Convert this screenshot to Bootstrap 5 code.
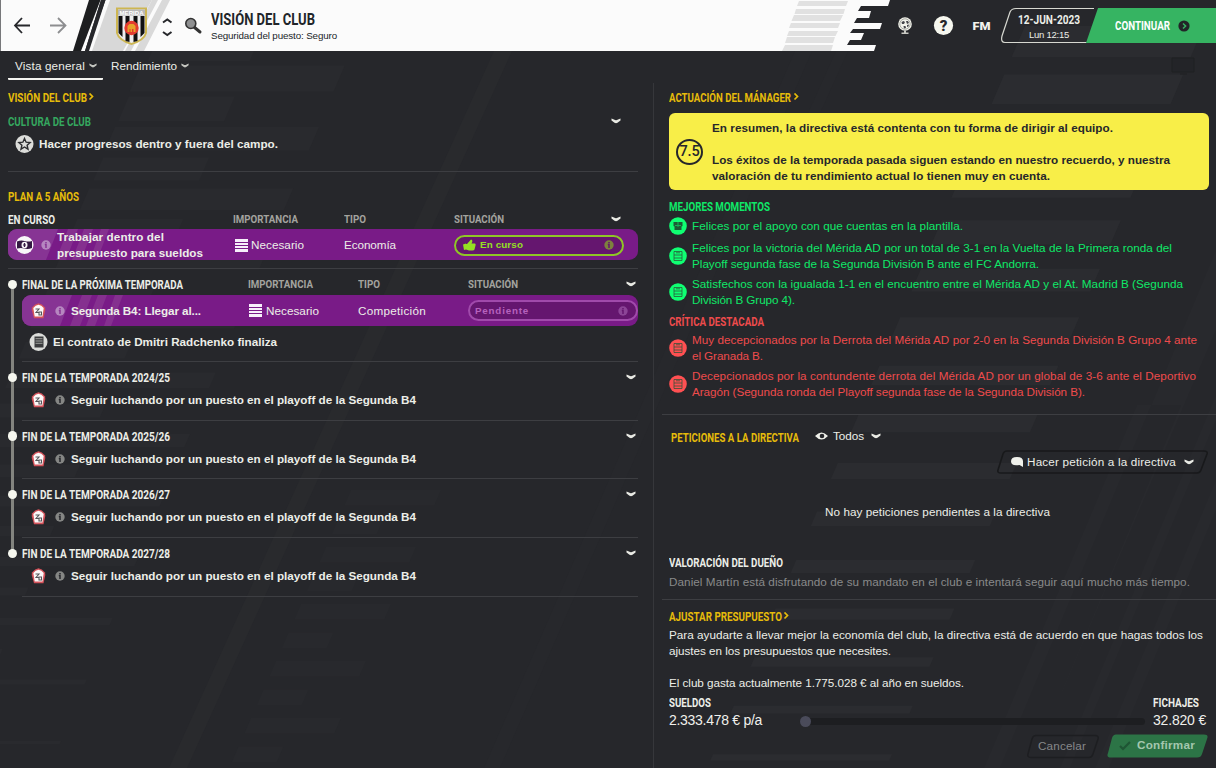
<!DOCTYPE html>
<html lang="es">
<head>
<meta charset="utf-8">
<meta name="viewport" content="width=device-width, initial-scale=1">
<title>Visión del club</title>
<link href="https://cdn.jsdelivr.net/npm/bootstrap@5.3.0/dist/css/bootstrap.min.css" rel="stylesheet">
<style>
body{width:1216px;height:768px;overflow:hidden;background:#26272b;color:#eceee8;font:11.7px/16px "Liberation Sans",Arial,sans-serif}
svg{display:block;flex:none}
.backdrop{position:absolute;left:0;top:0;z-index:0}
.topbar,.page{position:relative;z-index:1}
.topbar{height:51px}
.sp{display:inline-block;white-space:nowrap;font-weight:400}
.b{font-weight:700}
.hd{display:inline-block;white-space:nowrap;font:700 13px/16px Roboto,sans-serif;transform-origin:0 50%}
.page .hd{padding-top:1px;line-height:15px}
.gold{color:#e6bc0a}.green{color:#35a75f}.bright{color:#0fe868}.red{color:#ee4b4c}
.page .col-lab{font-size:10.5px;font-weight:700;color:#a3a39f}
.left{width:654px;height:717px}
.right{width:562px;height:717px}
.tabs{height:32px}
.tab{height:29px;padding:1px 7px 0}
.tab.on{border-bottom:2px solid #f4f4f0;border-radius:0 0 1px 1px;padding-top:3px}
.rule{height:1px;background:#3d3e42}
.goal{height:31px;background:#791b87;border-radius:9px;position:relative;overflow:hidden}
.goal>.stripes{position:absolute;left:0;top:0}
.goal>*{position:relative}
.grid{display:grid;align-items:center}
.g1{grid-template-columns:225px 111px 110px 1fr}
.g2{grid-template-columns:226px 110px 110px 1fr}
.pill{height:21px;width:170px;border:2px solid #8fc626;border-radius:11px;background:#65166f;color:#95e022;font-size:9.8px}
.pill.wait{border-color:#a04aab;color:#b562bd}
.timeline{position:relative;padding-left:22px}
.timeline::before{content:"";position:absolute;left:11px;top:16px;width:3px;height:268px;background:#83847f}
.season{position:relative;border-bottom:1px solid #3d3e42}
.season::before{content:"";position:absolute;left:-14.5px;top:10.5px;width:9.5px;height:9.5px;border-radius:50%;background:#f6f7ef}
.season.yr{height:58.7px}
.verdict{height:77px;background:#f8ee48;color:#26272b;border-radius:6px}
.score{width:27px;height:26px;border:2.5px solid #26272b;border-radius:50%;font:700 14.5px/21px Roboto,sans-serif}
.score .sp{font-weight:500}
.divide{border-left:1px solid #36373b;height:685px;margin-top:32px}
.dim{color:#898a8a}
.money{font-size:14px;line-height:18px;color:#f0f0ec}
.track{height:7px;background:#1d1e21;border-radius:4px}
.knob{width:11px;height:11px;border-radius:50%;background:#4a4b5a}
</style>
</head>
<body>
<svg class="backdrop" id="backdrop" width="1216" height="768"></svg>

<header class="topbar d-flex align-items-start">
  <svg width="211" height="51" viewBox="0 0 211 51">
    <path d="M0 0h1v51H0z" fill="#77787a"/>
    <path d="M107 0H152L123 51H90z" fill="#d8d8d8"/>
    <path d="M101 0H107L91 51H85z" fill="#26272b"/><path d="M89 0H100.500L81 51H73z" fill="#1d1e20"/>
    <path d="M105.500 0H110L92 51H87z" fill="#fafafa"/><path d="M101 0H105.500L89 51H85z" fill="#26272b"/>
    <path d="M152 0H158L131 51H125zM162 0H170L144 51H135z" fill="#d9d9d9"/>
    <path d="M116 7.500H147V33Q145 41 131.500 45Q118 41 116 33z" fill="#cdb652"/>
    <path d="M118 9.500H145V33Q143 39.500 131.500 43Q120 39.500 118 33z" fill="#eee"/>
    <path d="M118.500 16h4v21l-4-4zM125.500 16h4v26l-4-1zM133.500 16h4v25l-4 1zM140.500 16h4v17l-4 4z" fill="#111"/>
    <path d="M118 9.500h27v6h-27z" fill="#b9b9b9"/>
    <text x="119.500" y="15" font-family="Liberation Sans" font-size="6" font-weight="700" fill="#fff" textLength="24">MERIDA</text>
    <circle cx="131.500" cy="28" r="7.200" fill="#e23b2f"/><path d="M127.500 32v-6l2-2h4l2 2v6h-2v-3h-1.500v3h-1.500v-3h-1v3z" fill="#e8a22b"/>
    <g fill="none" stroke="#26272b" stroke-width="1.800"><path d="M30 25.500H15M22 18L15 25.500L22 33"/><path d="M50 25.500H65M58 18L65.500 25.500L58 33" stroke="#8d8e90"/>
    <path d="M163 22.500L167.300 19.500L171.500 22.500M163 32L167.300 35L171.500 32" stroke-width="2"/></g>
    <path d="M194 27L200 32" stroke="#333" stroke-width="3" stroke-linecap="round"/><circle cx="190.800" cy="23.500" r="5" fill="#8f9091" stroke="#333" stroke-width="1.600"/>
  </svg>
  <div class="text-dark d-flex flex-column" style="width:566px;padding-top:9px">
    <h1 class="hd m-0" data-w="104" style="font-size:17px;line-height:20px">VISIÓN DEL CLUB</h1>
    <span style="line-height:12px"><span class="sp" data-w="126" style="font-size:9.8px;line-height:12px">Seguridad del puesto: Seguro</span></span>
  </div>
  <svg width="223" height="51" viewBox="777 0 223 51">
    <path fill="#e1e1e1" d="M799 1H848L846 6H797zM796 9H845L843.500 14H794.500zM794 15H843L840 21H791.500zM791 23H840L838 28H789zM789 31H838L835.500 36H787zM787 37H835L833 43H785zM785 45H833L831 51H782z"/>
    <g transform="translate(905 25)"><circle cy="-1" r="6.800" fill="#f1f2ea"/><circle cy="-1" r="5.200" fill="none" stroke="#8b8c86" stroke-width=".7"/><path d="M-3.500-3l2-1 1.500 1-1 2h-2zM1-4h2l1 2-2 1zM-1.500 1h2l.5 2-2 .5zM2 0l2-.5-.5 2-1.500.5z" fill="#44454a"/><path d="M-1 5.500h2v2h2.500V9h-7V7.500H-1z" fill="#c9cac4"/></g>
    <circle cx="943.500" cy="25.500" r="9.600" fill="#f6f7ef"/><text x="943.500" y="31" text-anchor="middle" font-family="Roboto" font-size="15" font-weight="900" fill="#26272b">?</text>
    <text x="972.500" y="30" font-family="Roboto" font-weight="900" font-size="11.500" fill="#f2f3eb" textLength="18" lengthAdjust="spacingAndGlyphs">FM</text>
  </svg>
  <div class="position-relative" style="width:216px;height:51px">
    <svg class="position-absolute" width="216" height="51" viewBox="1000 0 216 51"><path d="M1094 8.500H1016Q1011.500 8.500 1010 12L1002 36Q1000.500 42.500 1005 42.500H1088" fill="none" stroke="#d7d8d1" stroke-width="1.200"/><path d="M1098 8H1216V43H1086z" fill="#36b462"/><circle cx="1184" cy="26" r="5.600" fill="#222528"/><path d="M1183 23.500l2.600 2.500-2.600 2.500" fill="none" stroke="#36b462" stroke-width="1.500"/></svg>
    <div class="d-flex position-relative" style="padding:11px 0 0 18px">
      <div style="width:97px"><span class="hd" data-w="62" style="line-height:17px">12-JUN-2023</span><div style="padding-left:11px;line-height:11px"><span class="sp" data-w="40" style="font-size:9.500px;line-height:11px">Lun 12:15</span></div></div>
      <span class="hd text-white" data-w="55" style="margin-top:7px">CONTINUAR</span>
    </div>
  </div>
</header>

<main class="page d-flex">
  <section class="left">
    <nav class="tabs d-flex" style="padding-left:8px">
      <div class="tab on d-flex align-items-center gap-1" style="width:95px"><span class="sp" data-w="70">Vista general</span><svg class="chev s" width="8" height="6" viewBox="0 0 10 7"></svg></div>
      <div class="tab d-flex align-items-center gap-1" style="padding-left:8px"><span class="sp" data-w="66">Rendimiento</span><svg class="chev s" width="8" height="6" viewBox="0 0 10 7"></svg></div>
    </nav>
    <div style="padding:6px 16px 0 8px">
      <div class="d-flex align-items-center gold" style="height:16px"><span class="hd" data-w="79">VISIÓN DEL CLUB</span><svg width="8" height="8"><path d="M2.500 .500l3 3-3 3" fill="none" stroke="#e6bc0a" stroke-width="1.700"/></svg></div>
      <div class="d-flex align-items-center justify-content-between green" style="height:16px;margin-top:8px;padding-right:17px"><span class="hd" data-w="83">CULTURA DE CLUB</span><svg class="chev" width="10" height="6"></svg></div>
      <div class="d-flex align-items-center" style="height:18px;margin-top:6px;padding-left:7px;gap:5px"><svg width="19" height="18"><circle cx="9.500" cy="9" r="9" fill="#dcddda"/><path d="M9.500 3.500l1.600 3.700 4 .3-3 2.700.9 4-3.500-2.200L6 14.200l.9-4-3-2.700 4-.3z" fill="#dcddda" stroke="#2c2d30" stroke-width="1.400"/></svg><span class="sp b" data-w="239">Hacer progresos dentro y fuera del campo.</span></div>
      <div class="rule" style="margin-top:18px"></div>
      <div style="height:16px;margin-top:16px"><span class="hd gold" data-w="71">PLAN A 5 AÑOS</span></div>
      <div class="grid g1 position-relative" style="height:16px;margin-top:7px"><span class="hd" data-w="47">EN CURSO</span><span class="hd col-lab" data-w="65">IMPORTANCIA</span><span class="hd col-lab" data-w="22">TIPO</span><span class="d-flex align-items-center justify-content-between" style="padding-right:17px"><span class="hd col-lab" data-w="50">SITUACIÓN</span><svg class="chev" width="10" height="6"></svg></span></div>
      <div class="goal grid g1" style="margin-top:2px">
        <svg class="stripes position-absolute" width="130" height="31"><path d="M0 0H50L38 31H0z" fill="#873494"/><path d="M60 0h10L58 31H48zM76 0h9L73 31H64zM93 0h8L89 31h-7z" fill="#85308f"/></svg>
        <div class="d-flex align-items-center" style="padding-left:7px;gap:7px"><svg width="19" height="18"><circle cx="9.500" cy="9" r="9" fill="#f8f5f9"/><path d="M2 5.500q4-1.500 7.500-.5T17 5v7q-4 1.500-7.500 .5T2 12.500z" fill="#341943"/><ellipse cx="9.500" cy="9" rx="3" ry="3.300" fill="#f8f5f9"/><path d="M9.500 7v4M8.300 9h2.400" stroke="#341943" stroke-width="1.300"/></svg><svg class="info" data-c="#b687c0" data-d="#873494" width="10" height="10"></svg><div style="margin-left:-1px"><div><span class="sp b" data-w="107">Trabajar dentro del</span></div><div><span class="sp b" data-w="146">presupuesto para sueldos</span></div></div></div>
        <div class="d-flex align-items-center" style="gap:3px;padding-left:2px"><svg class="bars" width="13" height="13"></svg><span class="sp" data-w="53">Necesario</span></div>
        <span><span class="sp" data-w="52">Economía</span></span>
        <div class="pill d-flex align-items-center" style="padding:0 8px 0 7px"><svg width="13" height="12" viewBox="0 0 13 12"><path d="M0 5.500L3 4.500V10.500L1 11zM4 5L8 0.500Q10 1 9 3.500L8.500 4.500H12Q13 5 12.500 6.500L11.500 10.500Q11 11.500 9.500 11.500H6L3 10.500V5z" fill="#95e022"/></svg><span class="sp b ms-1 me-auto" data-w="43">En curso</span><svg class="info" data-c="#7d813d" data-d="#65166f" width="10" height="10"></svg></div>
      </div>
      <div class="rule" style="margin-top:8px"></div>
    </div>
    <div class="timeline" style="margin-right:16px">
      <div class="season" style="height:93px;padding-top:7px">
        <div class="grid g2" style="height:16px"><span class="hd" data-w="161">FINAL DE LA PRÓXIMA TEMPORADA</span><span class="hd col-lab" data-w="65">IMPORTANCIA</span><span class="hd col-lab" data-w="22">TIPO</span><span class="d-flex align-items-center justify-content-between" style="padding-right:2px"><span class="hd col-lab" data-w="50">SITUACIÓN</span><svg class="chev" width="10" height="6"></svg></span></div>
        <div class="goal grid g2" style="margin-top:3px">
          <svg class="stripes position-absolute" width="130" height="31"><path d="M0 0H50L38 31H0z" fill="#873494"/><path d="M60 0h10L58 31H48zM76 0h9L73 31H64zM93 0h8L89 31h-7z" fill="#85308f"/></svg>
          <div class="d-flex align-items-center" style="padding-left:9px"><svg class="crest" width="15" height="16"></svg><svg class="info" data-c="#b687c0" data-d="#873494" width="10" height="10" style="margin:0 6px 0 9px"></svg><span class="sp b" data-w="130">Segunda B4: Llegar al...</span></div>
          <div class="d-flex align-items-center" style="gap:4px;padding-left:1px"><svg class="bars" width="13" height="13"></svg><span class="sp" data-w="53">Necesario</span></div>
          <span><span class="sp" data-w="68">Competición</span></span>
          <div class="pill wait d-flex align-items-center" style="padding:0 8px 0 5px"><span class="sp b me-auto" data-w="54">Pendiente</span><svg class="info" data-c="#8c4497" data-d="#65166f" width="10" height="10"></svg></div>
        </div>
        <div class="d-flex align-items-center" style="height:18px;margin-top:7px;padding-left:7px;gap:5px"><svg width="19" height="18"><circle cx="9.500" cy="9" r="9" fill="#dcddda"/><path d="M5.500 3.500h9v11h-9z" fill="#3b3c3e"/><path d="M6.500 5.700h7M6.500 8h7M6.500 10.300h7" stroke="#a9aaa8" stroke-width=".9"/></svg><span class="sp b" data-w="224">El contrato de Dmitri Radchenko finaliza</span></div>
      </div>
      <div id="years"></div>
    </div>
  </section>

  <section class="right d-flex">
    <div class="divide" style="width:9px;margin-left:-1px"></div>
    <div style="width:554px;padding-top:38px">
      <div style="padding:0 7px 0 7px">
        <div class="d-flex align-items-center" style="height:16px"><span class="hd gold" data-w="122">ACTUACIÓN DEL MÁNAGER</span><svg width="8" height="8" style="margin-left:1px"><path d="M2.500 .500l3 3-3 3" fill="none" stroke="#e6bc0a" stroke-width="1.700"/></svg></div>
        <div class="verdict d-flex align-items-center" style="margin-top:8px;padding-left:7px;gap:9px"><div class="score text-center"><span class="sp" data-w="20">7.5</span></div><div><div><span class="sp b" data-w="401">En resumen, la directiva está contenta con tu forma de dirigir al equipo.</span></div><div style="height:16px"></div><div><span class="sp b" data-w="458">Los éxitos de la temporada pasada siguen estando en nuestro recuerdo, y nuestra</span></div><div><span class="sp b" data-w="338">valoración de tu rendimiento actual lo tienen muy en cuenta.</span></div></div></div>
        <div style="height:16px;margin-top:8px"><span class="hd bright" data-w="101">MEJORES MOMENTOS</span></div>
        <div id="good" class="bright"></div>
        <div style="height:16px;margin-top:5px"><span class="hd red" data-w="95">CRÍTICA DESTACADA</span></div>
        <div id="bad" class="red" style="padding-top:3px"></div>
      </div>
      <div class="rule" style="margin-top:14px"></div>
      <div style="padding:0 7px">
        <div class="d-flex align-items-center" style="height:16px;margin-top:14px;padding-left:2px"><span class="hd gold" data-w="128">PETICIONES A LA DIRECTIVA</span><svg width="13" height="10" style="margin:-3px 5px 0 16px"><path d="M0 5Q6.500-2 13 5Q6.500 12 0 5z" fill="#f0f1eb"/><circle cx="7" cy="5" r="2.300" fill="#26272b"/></svg><span class="sp" data-w="31" style="margin-top:-3px">Todos</span><svg class="chev" width="10" height="6" style="margin:-2px 0 0 7px"></svg></div>
        <div class="d-flex justify-content-end" style="height:24px;margin:5px 1px 0 0">
          <div class="position-relative d-flex align-items-center" style="width:211px;padding-left:14px"><svg class="position-absolute start-0 top-0" width="211" height="24"><path d="M10 1H207Q211 1 210 4L204 20Q203 23 200 23H4Q0 23 1 20L6 4Q7 1 10 1z" fill="none" stroke="#18191b" stroke-width="1.600"/></svg><svg width="12" height="10" class="position-relative"><path d="M6 0Q12 0 12 4.300V10L8.500 8Q0 9.500 0 4.300Q0 0 6 0z" fill="#f0f1eb"/></svg><span class="sp position-relative" data-w="149" style="margin-left:4px">Hacer petición a la directiva</span><svg class="chev position-relative" width="10" height="6" style="margin-left:8px"></svg></div>
        </div>
        <div style="margin-top:30px;padding-left:156px"><span class="sp" data-w="225">No hay peticiones pendientes a la directiva</span></div>
        <div style="height:16px;margin-top:34px"><span class="hd" data-w="114">VALORACIÓN DEL DUEÑO</span></div>
        <div class="dim" style="margin-top:4px"><span class="sp" data-w="521">Daniel Martín está disfrutando de su mandato en el club e intentará seguir aquí mucho más tiempo.</span></div>
      </div>
      <div class="rule" style="margin-top:9px"></div>
      <div style="padding:8px 7px 0">
        <div class="d-flex align-items-center" style="height:16px"><span class="hd gold" data-w="113">AJUSTAR PRESUPUESTO</span><svg width="8" height="8"><path d="M2.500 .500l3 3-3 3" fill="none" stroke="#e6bc0a" stroke-width="1.700"/></svg></div>
        <div style="margin-top:3px"><span class="sp" data-w="534">Para ayudarte a llevar mejor la economía del club, la directiva está de acuerdo en que hagas todos los</span></div>
        <div><span class="sp" data-w="222">ajustes en los presupuestos que necesites.</span></div>
        <div style="margin-top:16px"><span class="sp" data-w="295">El club gasta actualmente 1.775.028 € al año en sueldos.</span></div>
        <div class="d-flex" style="margin-top:3px">
          <div style="width:131px"><div style="height:16px"><span class="hd" data-w="42">SUELDOS</span></div><div class="money"><span class="sp" data-w="93" style="margin-top:1px">2.333.478 € p/a</span></div></div>
          <div style="width:345px;padding-top:24px"><div class="track"><div class="knob" style="transform:translateY(-2px)"></div></div></div>
          <div style="padding-left:8px"><div style="height:16px"><span class="hd" data-w="46">FICHAJES</span></div><div class="money"><span class="sp" data-w="53" style="margin-top:1px">32.820 €</span></div></div>
        </div>
        <div class="d-flex justify-content-end gap-2" style="margin:5px 1px 0 0">
          <div class="position-relative" style="width:72px;height:25px;padding:4px 0 0 11px;color:#86878a"><svg class="position-absolute start-0 top-0" width="72" height="25"><path d="M9 1.500H68Q72 1.500 71 5L66 20Q65 23.500 62 23.500H4Q0 23.500 1 20L5 5Q6 1.500 9 1.500z" fill="none" stroke="#1d1e21" stroke-width="1.500"/></svg><span class="sp position-relative" data-w="48">Cancelar</span></div>
          <div class="position-relative d-flex" style="width:101px;height:25px;padding:3px 0 0 13px;color:#a3c7ae"><svg class="position-absolute start-0 top-0" width="101" height="25"><path d="M9 .5H97Q102 .5 100 5L95 20Q94 23.500 90 23.500H4Q-1 23.500 1 19L5 4Q6 .5 9 .5z" fill="#2c7446"/><path d="M13 12l3 3L23 8" fill="none" stroke="#1f5534" stroke-width="2.200"/></svg><span class="sp b position-relative" data-w="58" style="margin-left:17px">Confirmar</span></div>
        </div>
      </div>
    </div>
  </section>
</main>

<script src="https://cdn.jsdelivr.net/npm/bootstrap@5.3.0/dist/js/bootstrap.bundle.min.js"></script>
<script>
const all = (s) => document.querySelectorAll(s);

// Season rows of the five-year plan
document.getElementById('years').innerHTML = ['2024/25', '2025/26', '2026/27', '2027/28'].map(y => `
  <div class="season yr"><div class="d-flex align-items-center justify-content-between" style="height:23px;padding:7px 2px 0 0"><span class="hd" data-w="148">FIN DE LA TEMPORADA ${y}</span><svg class="chev" width="10" height="6"></svg></div>
  <div class="d-flex align-items-center" style="height:16px;margin-top:7px;padding-left:9px"><svg class="crest" width="15" height="16"></svg><svg class="info" data-c="#858684" data-d="#26272b" width="10" height="10" style="margin:0 6px 0 9px"></svg><span class="sp b" data-w="345">Seguir luchando por un puesto en el playoff de la Segunda B4</span></div></div>`).join('');

// Board feedback lists
const feed = (id, color, items) => document.getElementById(id).innerHTML = items.map((lines, i) => `
  <div class="d-flex align-items-center" style="gap:5px;margin-bottom:${lines.length > 1 ? 4 : 5}px;padding-top:${lines.length > 1 ? 0 : 3}px"><svg width="18" height="18"><circle cx="9" cy="9" r="8.800" fill="${color}"/>${lines.length > 1
    ? '<path d="M5 4.500h8v9H5zM5 8h8M5 11h8M7 5.800h4" fill="none" stroke="#2b5138" stroke-opacity=".75" stroke-width="1"/>'
    : '<path d="M4.500 5h9v4l-1 .5V13H5.500V9.500l-1-.5z" fill="#1d5a35"/><path d="M9 5v5M6 8.500h6" stroke="#13b255"/>'}</svg><div>${lines.map(l => `<div><span class="sp" data-w="${l[1]}">${l[0]}</span></div>`).join('')}</div></div>`).join('');
feed('good', '#0fff72', [
  [['Felices por el apoyo con que cuentas en la plantilla.', 271]],
  [['Felices por la victoria del Mérida AD por un total de 3-1 en la Vuelta de la Primera ronda del', 480], ['Playoff segunda fase de la Segunda División B ante el FC Andorra.', 347]],
  [['Satisfechos con la igualada 1-1 en el encuentro entre el Mérida AD y el At. Madrid B (Segunda', 491], ['División B Grupo 4).', 103]]]);
feed('bad', '#ff5052', [
  [['Muy decepcionados por la Derrota del Mérida AD por 2-0 en la Segunda División B Grupo 4 ante', 505], ['el Granada B.', 71]],
  [['Decepcionados por la contundente derrota del Mérida AD por un global de 3-6 ante el Deportivo', 504], ['Aragón (Segunda ronda del Playoff segunda fase de la Segunda División B).', 393]]]);

// Repeated icons
all('.chev').forEach(e => e.innerHTML = `<path d="M.5 .5L3 1.600Q5 3 7 1.600L9.500 .5V2.600L6.500 4.800Q5 5.700 3.500 4.800L.5 2.600z" fill="${e.classList.contains('s') ? '#c4c5c0' : '#e9eae4'}"/>`);
all('.info').forEach(e => e.innerHTML = `<circle cx="5" cy="5" r="4.700" fill="${e.dataset.c}"/><path d="M5 2v1.300M3.800 4.600H5V8" stroke="${e.dataset.d}" stroke-width="1.500" fill="none"/>`);
all('.bars').forEach(e => e.innerHTML = '<path d="M0 0h13v3H0zM0 4h13v2H0zM0 7h13v2H0zM0 10h13v3H0z" fill="#f6effa"/>');
all('.crest').forEach(e => e.innerHTML = '<path d="M7.500 .3Q11 .8 14 4.500L14.300 7L12.500 15.300H3L.7 7L1 4.500Q4 .8 7.500 .3z" fill="#d4525a"/><path d="M7.500 1.800Q10.500 2 12.700 5L11.500 13.500H3.700L2.300 5Q4.500 2 7.500 1.800z" fill="#fdf8f8"/><path d="M4.500 6h3.500l-3 3.500h3.500M8 9h2.500v3H8z" fill="none" stroke="#55565a" stroke-width="1.100"/>');

// Backdrop: slanted ladders of bars and long diagonal streaks
const bar = (x1, x2, y, h, c) => `<path d="M${x1} ${y}H${x2}l${-h * .43} ${h}H${x1 - h * .43}z" fill="${c}"/>`;
let s = '';
for (let k = 0; k < 23; k++) {
  const y = 65.500 + k * 30.7, h = 26 - (y - 65) * .034, o = .42 * (y - 65);
  s += k % 2 ? bar(142 - o, 248 - o, y, h, '#292a2e') : bar(141 - o, 345 - o, y, h, '#292a2e');
}
s += bar(152, 254, 51, 10, '#292a2e');
for (let k = 0; k < 16; k++) { const y = 26 + k * 48.550; s += bar(1025 - k * 20.8, 1204 - k * 20.8, y, 31 - k * 1.650, '#2b2c30'); }
for (let k = 0; k < 10; k++) { const y = 490 + k * 28.500; s += bar(351 - k * 12.500, (k % 2 ? 396 : 441) - k * 12.500, y, 15.500, '#28292d'); }
s += '<path d="M494 51h18L187 768h-18z" fill="#292a2d"/><path d="M795 51h17L500 768h-16zM836 51h12L790 180h-12z" fill="#27282c"/><path d="M1216 250L1000 768h30L1216 330zM1137 405h44L1030 768h-46zM1216 395L1060 768h10L1216 420zM1216 480L1095 768h14L1216 510z" fill="#fff" fill-opacity=".01"/>';
s += '<path d="M1172 58h22v14h-22z" fill="#232428" stroke="#1f2023"/><path d="M1180 74h7" stroke="#1f2023"/>';
s += '<path d="M0 0H890L888 6H861L858 11H871L869 18H857L854 23H882L880 29H853L850 33H864L861 40H850L847 45H876L874 51H0z" fill="#fbfbfb"/>';
document.getElementById('backdrop').innerHTML = s;

all('[data-w]').forEach(e => {
  const w = +e.dataset.w;
  e.style.width = 'max-content';
  const n = e.getBoundingClientRect().width;
  if (e.classList.contains('hd')) e.style.transform = `scaleX(${w / n})`;
  else e.style.letterSpacing = (w - n) / e.textContent.length + 'px';
  e.style.width = w + 'px';
});
</script>
</body>
</html>
